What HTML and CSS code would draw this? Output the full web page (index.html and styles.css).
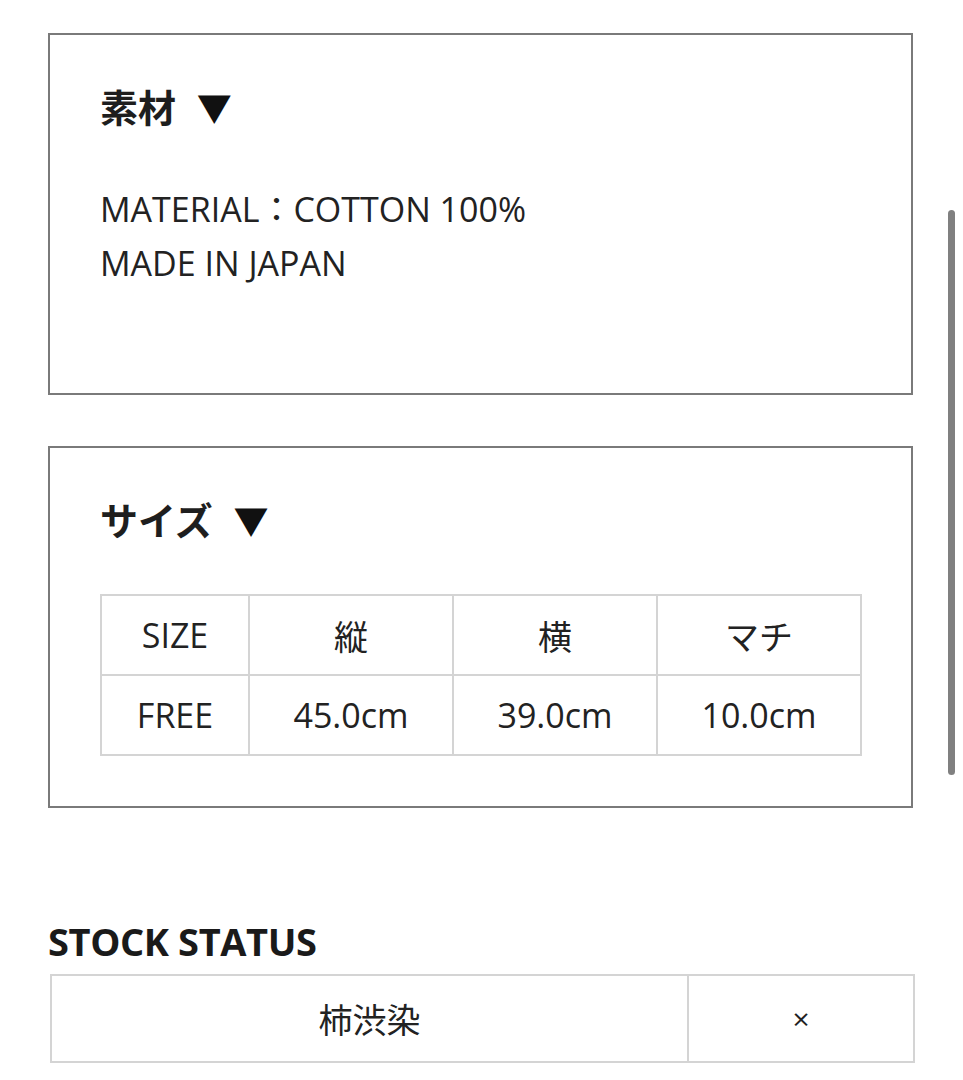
FILE: index.html
```html
<!DOCTYPE html>
<html lang="ja">
<head>
<meta charset="utf-8">
<title>素材・サイズ</title>
<link rel="stylesheet" href="styles.css">
</head>
<body>
<div class="page">
  <section class="box box-material">
    <h2 class="box-title">素材 <span class="tri">▼</span></h2>
    <p class="box-text">MATERIAL：COTTON 100%<br>MADE IN JAPAN</p>
  </section>
  <section class="box box-size">
    <h2 class="box-title">サイズ <span class="tri">▼</span></h2>
    <table class="size-table">
      <tr><td class="c1">SIZE</td><td>縦</td><td>横</td><td>マチ</td></tr>
      <tr><td class="c1">FREE</td><td>45.0cm</td><td>39.0cm</td><td>10.0cm</td></tr>
    </table>
  </section>
  <section class="stock">
    <h2 class="stock-title">STOCK STATUS</h2>
    <table class="stock-table">
      <tr><td class="s1">柿渋染</td><td class="s2">×</td></tr>
    </table>
  </section>
</div>
<div class="scrollbar"></div>
</body>
</html>
```
FILE: styles.css
```css
html, body {
  margin: 0;
  padding: 0;
  background: #ffffff;
}
body {
  font-family: "Open Sans", "Noto Sans CJK JP", sans-serif;
  color: #222222;
}
.page {
  padding: 33px 50px 0 48px;
}
.box {
  border: 2px solid #7a7a7a;
  padding: 45px 49px 50px 50px;
}
.box + .box {
  margin-top: 51px;
}
.box-title {
  margin: 0;
  font-family: "Noto Sans CJK JP", sans-serif;
  font-weight: 700;
  font-size: 38px;
  line-height: 52px;
  color: #1e1e1e;
}
.tri {
  font-size: 35px;
  margin-left: 12px;
  color: #111111;
}
.box-text {
  margin: 49px 0 0 0;
  font-size: 34px;
  line-height: 54px;
  padding-bottom: 53px;
}
.size-table {
  margin-top: 48px;
  width: 100%;
  border-collapse: collapse;
  table-layout: fixed;
}
.size-table td {
  border: 2px solid #d4d4d4;
  height: 78px;
  padding: 0;
  text-align: center;
  font-size: 34px;
  font-family: "Open Sans", "Noto Sans CJK JP", sans-serif;
}
.size-table .c1 {
  width: 146px;
}
.stock {
  margin-top: 107px;
}
.stock-title {
  margin: 0;
  font-weight: 700;
  font-size: 38px;
  line-height: 52px;
  color: #1a1a1a;
  letter-spacing: -0.4px;
}
.stock-table {
  margin: 7px 0 0 2px;
  width: 865px;
  border-collapse: collapse;
  table-layout: fixed;
}
.stock-table td {
  border: 2px solid #d4d4d4;
  height: 85px;
  padding: 0;
  text-align: center;
  font-size: 34px;
}
.stock-table .s2 {
  width: 224px;
  font-size: 30px;
  color: #222222;
}
.scrollbar {
  position: fixed;
  top: 210px;
  right: 8px;
  width: 7px;
  height: 565px;
  border-radius: 4px;
  background: #808080;
}
```
